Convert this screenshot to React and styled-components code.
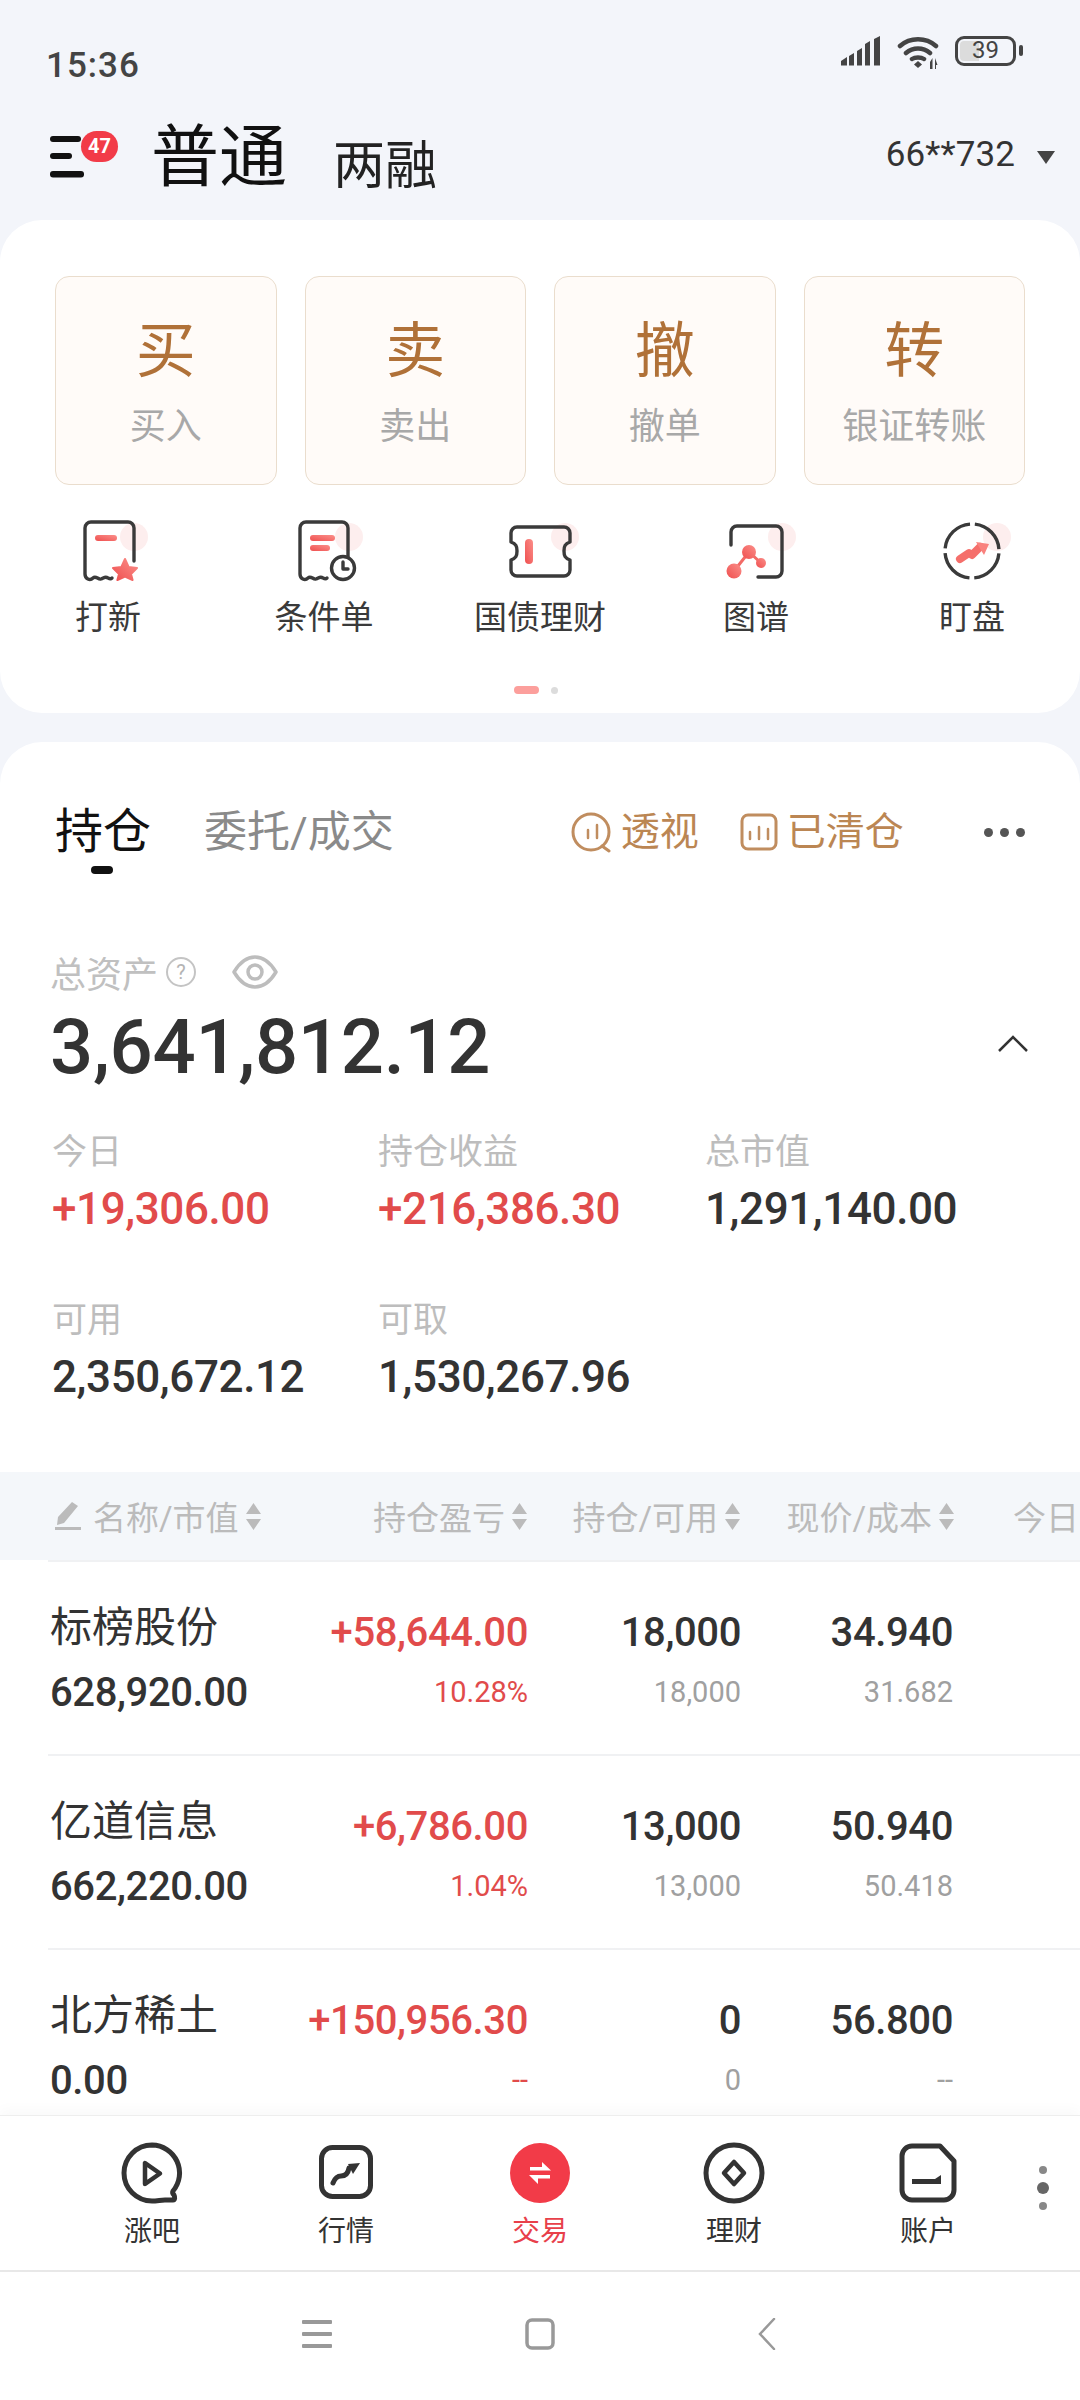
import React from 'react';
import styled, { createGlobalStyle } from 'styled-components';

const GlobalStyle = createGlobalStyle`
  html, body {
    margin: 0;
    padding: 0;
    background: #f3f5fa;
    font-family: Roboto, "Noto Sans CJK SC", sans-serif;
  }
  * { box-sizing: border-box; }
`;

const Screen = styled.div`
  width: 1080px;
  height: 2400px;
  display: flex;
  flex-direction: column;
  overflow: hidden;
  background: #f3f5fa;
`;

const StatusBar = styled.div`
  height: 100px;
  display: flex;
  justify-content: space-between;
  padding: 36px 64px 0 46px;
`;

const Time = styled.div`
  margin-top: 11px;
  font-size: 35px;
  line-height: 38px;
  letter-spacing: 1px;
  font-weight: 500;
  color: #444;
`;

const StatusIcons = styled.div`
  display: flex;
  align-items: flex-start;
  gap: 16px;
`;

const Battery = styled.div`
  position: relative;
  width: 61px;
  height: 30px;
  border: 3.5px solid #444;
  border-radius: 9px;
  background: linear-gradient(90deg, #dcdcdc 0 39%, transparent 39%);
  background-clip: content-box;
  padding: 2px;
  font-size: 24px;
  line-height: 19px;
  text-align: center;
  color: #444;

  &::after {
    content: '';
    position: absolute;
    right: -10px;
    top: 6px;
    width: 4px;
    height: 11px;
    border-radius: 2px;
    background: #444;
  }
`;

const Header = styled.div`
  height: 120px;
  display: flex;
  align-items: center;
  padding: 0 25px 10px 50px;
`;

const MenuWrap = styled.div`
  position: relative;
  width: 68px;
  height: 46px;
  margin: 4px 33px 0 0;
`;

const Badge = styled.span`
  position: absolute;
  left: 31px;
  top: -3px;
  width: 37px;
  height: 31px;
  border-radius: 16px;
  background: #f23b48;
  color: #fff;
  font-size: 20px;
  font-weight: 700;
  line-height: 31px;
  text-align: center;
`;

const Title = styled.div`
  margin-top: 5px;
  font-size: 68px;
  line-height: 70px;
  color: #111;
`;

const SubTitle = styled.div`
  margin: 24px 0 0 46px;
  font-size: 52px;
  line-height: 56px;
  color: #222;
`;

const Account = styled.div`
  margin-left: auto;
  font-size: 35px;
  line-height: 40px;
  letter-spacing: 0.1px;
  color: #333;
`;

const Caret = styled.span`
  margin: 4px 0 0 22px;
  border-left: 9px solid transparent;
  border-right: 9px solid transparent;
  border-top: 13px solid #444;
`;

const QuickCard = styled.section`
  height: 493px;
  padding-top: 56px;
  background: #fff;
  border-radius: 42px;
`;

const ActionGrid = styled.div`
  display: grid;
  grid-template-columns: repeat(4, 1fr);
  gap: 28px;
  padding: 0 55px;
`;

const ActionButton = styled.div`
  height: 209px;
  padding-top: 40px;
  display: flex;
  flex-direction: column;
  align-items: center;
  background: #fffbf8;
  border: 1.5px solid #eaddcd;
  border-radius: 14px;
`;

const ActionChar = styled.div`
  font-size: 60px;
  line-height: 70px;
  color: #b07138;
`;

const ActionLabel = styled.div`
  margin-top: 18px;
  font-size: 36px;
  line-height: 44px;
  color: #a8a8a8;
`;

const ShortcutRow = styled.div`
  margin-top: 30px;
  display: grid;
  grid-template-columns: repeat(5, 216px);
`;

const Shortcut = styled.div`
  display: flex;
  flex-direction: column;
  align-items: center;
`;

const ShortcutLabel = styled.div`
  margin-top: 11px;
  font-size: 33px;
  line-height: 44px;
  white-space: nowrap;
  color: #3a3a3a;
`;

const PageDots = styled.div`
  margin-top: 46px;
  padding-right: 8px;
  display: flex;
  justify-content: center;
  align-items: center;
  gap: 12px;
`;

const PageDot = styled.span`
  width: ${(p) => (p.$active ? 25 : 7)}px;
  height: ${(p) => (p.$active ? 8 : 7)}px;
  border-radius: 4px;
  background: ${(p) => (p.$active ? '#fc9f9c' : '#dcdcdc')};
`;

const HoldingCard = styled.section`
  flex: 1;
  min-height: 0;
  margin-top: 29px;
  overflow: hidden;
  background: #fff;
  border-radius: 42px 42px 0 0;
`;

const TabRow = styled.div`
  height: 60px;
  margin-top: 60px;
  display: flex;
  align-items: center;
  padding: 0 55px;
`;

const Tab = styled.div`
  position: relative;
  flex: none;
  font-size: ${(p) => (p.$active ? 48 : 43)}px;
  line-height: 60px;
  white-space: nowrap;
  color: ${(p) => (p.$active ? '#111' : '#8a8a8a')};
  margin-right: 53px;

  ${(p) =>
    p.$active &&
    `&::after {
      content: '';
      position: absolute;
      left: 36px;
      bottom: -12px;
      width: 22px;
      height: 8px;
      border-radius: 4px;
      background: #111;
    }`}
`;

const ToolLink = styled.div`
  flex: none;
  display: flex;
  align-items: center;
  gap: 9px;
  font-size: 39px;
  line-height: 50px;
  white-space: nowrap;
  color: #bb8653;
  margin-left: ${(p) => p.$gap}px;
`;

const MoreDots = styled.div`
  margin-left: 80px;
  display: flex;
  gap: 7px;
`;

const MoreDot = styled.span`
  width: 9px;
  height: 9px;
  border-radius: 50%;
  background: #555;
`;

const AssetLabelRow = styled.div`
  height: 40px;
  margin-top: 90px;
  padding-left: 50px;
  display: flex;
  align-items: center;
  font-size: 36px;
  color: #c0c0c0;
`;

const HelpMark = styled.span`
  width: 30px;
  height: 30px;
  margin: 0 36px 0 8px;
  border: 2px solid #c4c4c4;
  border-radius: 50%;
  font-size: 20px;
  line-height: 26px;
  text-align: center;
  color: #b4b4b4;
`;

const TotalRow = styled.div`
  height: 80px;
  margin-top: 15px;
  padding: 0 52px 0 50px;
  display: flex;
  align-items: center;
  justify-content: space-between;

  svg {
    margin-bottom: 7px;
  }
`;

const TotalValue = styled.div`
  font-size: 76px;
  line-height: 80px;
  font-weight: 500;
  letter-spacing: -0.3px;
  color: #333;
`;

const StatGrid = styled.div`
  margin-top: 44px;
  padding-left: 52px;
  display: grid;
  grid-template-columns: 326px 327px 1fr;
  row-gap: 65px;
`;

const StatLabel = styled.div`
  font-size: 35px;
  line-height: 44px;
  color: #bdbdbd;
`;

const StatValue = styled.div`
  margin-top: 9px;
  font-size: 44px;
  line-height: 50px;
  letter-spacing: -0.4px;
  font-weight: 500;
  color: ${(p) => (p.$up ? '#e14b4b' : '#333')};
`;

const TableHead = styled.div`
  height: 88px;
  margin-top: 70px;
  display: grid;
  grid-template-columns: 300px 228px 213px 214px 200px;
  align-items: center;
  background: #f4f7fa;
  font-size: 33px;
  color: #bbb;
`;

const HeadCell = styled.div`
  display: flex;
  align-items: center;
  justify-content: ${(p) => (p.$left ? 'flex-start' : 'flex-end')};
  gap: 6px;
  padding-left: ${(p) => p.$pad || 0}px;
  white-space: nowrap;
`;

const PencilIcon = styled.svg`
  margin-right: 6px;
`;

const StockRow = styled.div`
  height: 194px;
  margin-left: 48px;
  border-top: 2px solid #f0f1f3;
  display: grid;
  grid-template-columns: 252px 228px 213px 212px;
`;

const NameCell = styled.div`
  padding: 44px 0 0 2px;
`;

const StockName = styled.div`
  font-size: 42px;
  line-height: 44px;
  color: #333;
`;

const MarketValue = styled.div`
  margin-top: 21px;
  font-size: 40px;
  line-height: 44px;
  letter-spacing: -0.4px;
  font-weight: 500;
  color: #333;
`;

const NumCell = styled.div`
  padding-top: 49px;
  text-align: right;
`;

const MainNum = styled.div`
  font-size: 40px;
  line-height: 44px;
  letter-spacing: -0.4px;
  font-weight: 500;
  color: ${(p) => (p.$up ? '#e14b4b' : '#333')};
`;

const SubNum = styled.div`
  margin-top: 17px;
  font-size: 29px;
  line-height: 40px;
  color: ${(p) => (p.$up ? '#e14b4b' : '#a0a0a0')};
`;

const TabBar = styled.nav`
  height: 155px;
  padding: 26px 0 0 55px;
  display: grid;
  grid-template-columns: repeat(5, 194px) 36px;
  background: #fff;
  border-top: 1px solid #eee;
  box-shadow: 0 -6px 12px rgba(0, 0, 0, 0.025);
  position: relative;
`;

const TabItem = styled.div`
  display: flex;
  flex-direction: column;
  align-items: center;
`;

const TabLabel = styled.div`
  margin-top: 10px;
  font-size: 28px;
  line-height: 36px;
  color: ${(p) => (p.$active ? '#e8404a' : '#333')};
`;

const TabMore = styled.div`
  margin-top: 24px;
  display: flex;
  flex-direction: column;
  align-items: center;
  gap: 8px;
`;

const TabMoreDot = styled.span`
  width: ${(p) => (p.$big ? 12 : 8)}px;
  height: ${(p) => (p.$big ? 12 : 8)}px;
  border-radius: 50%;
  background: ${(p) => (p.$big ? '#666' : '#888')};
`;

const SystemNav = styled.div`
  height: 130px;
  border-top: 2px solid #e8e8e8;
  background: #fff;
  display: grid;
  grid-template-columns: 302px 30px 193px 30px 203px 18px;
  align-items: center;
  padding-bottom: 4px;
`;

const SysCell = styled.div`
  grid-column: ${(p) => p.$col};
  display: flex;
`;

const stats = [
  { label: '今日', value: '+19,306.00', up: true },
  { label: '持仓收益', value: '+216,386.30', up: true },
  { label: '总市值', value: '1,291,140.00' },
  { label: '可用', value: '2,350,672.12' },
  { label: '可取', value: '1,530,267.96' },
];

const stocks = [
  { name: '标榜股份', cap: '628,920.00', pnl: '+58,644.00', rate: '10.28%', hold: '18,000', avail: '18,000', price: '34.940', cost: '31.682' },
  { name: '亿道信息', cap: '662,220.00', pnl: '+6,786.00', rate: '1.04%', hold: '13,000', avail: '13,000', price: '50.940', cost: '50.418' },
  { name: '北方稀土', cap: '0.00', pnl: '+150,956.30', rate: '--', hold: '0', avail: '0', price: '56.800', cost: '--' },
];

const DARK = '#333';

function Gradients() {
  return (
    <svg width="0" height="0" style={{ position: 'absolute' }}>
      <defs>
        <linearGradient id="redFade" x1="0" y1="1" x2="1" y2="0">
          <stop offset="0" stopColor="#ef4f4f" />
          <stop offset="1" stopColor="#fb8f8a" />
        </linearGradient>
      </defs>
    </svg>
  );
}

function ShortcutIcon({ children, haloX = 71 }) {
  return (
    <svg width="90" height="70" viewBox="0 0 90 70" fill="none">
      <circle cx={haloX} cy="22" r="14" fill="#fdeeee" />
      {children}
    </svg>
  );
}

const outline = { stroke: '#3a3a3a', strokeWidth: 3.4, strokeLinecap: 'round', strokeLinejoin: 'round' };

function NewStockIcon() {
  return (
    <ShortcutIcon>
      <path {...outline} d="M71 46V13a6 6 0 0 0-6-6H28a6 6 0 0 0-6 6v46c0 5 5 7 8 4 3-3 5 2 8 1s4-3 7-1c2 1 3 1 4 0" />
      <rect x="32" y="20" width="22" height="6" rx="3" fill="url(#redFade)" />
      <path fill="url(#redFade)" stroke="url(#redFade)" strokeWidth="2" strokeLinejoin="round" d="M62 44l3.600 8 8.400 1-6 6 1.600 6-7.600-3.500-7.600 3.500 1.600-6-6-6 8.400-1z" />
    </ShortcutIcon>
  );
}

function ConditionIcon() {
  return (
    <ShortcutIcon haloX={70}>
      <path {...outline} d="M69 42V13a6 6 0 0 0-6-6H27a6 6 0 0 0-6 6v46c0 5 5 7 8 4 3-3 5 2 8 1s4-3 7-1c2 1 3 1 4 0" />
      <rect x="31" y="20" width="25" height="6" rx="3" fill="url(#redFade)" />
      <rect x="31" y="30" width="20" height="6" rx="3" fill="url(#redFade)" />
      <circle cx="64" cy="53" r="11.500" {...outline} fill="#fff" />
      <path {...outline} d="M64 47v7h5" />
    </ShortcutIcon>
  );
}

function BondIcon() {
  return (
    <ShortcutIcon haloX={70}>
      <path {...outline} d="M22 12h47a6 6 0 0 1 6 6v9c-5 2-6 4-6 9s1 7 6 9v10a6 6 0 0 1-6 6H22a6 6 0 0 1-6-6V45c5-2 6-4 6-9s-1-7-6-9v-9a6 6 0 0 1 6-6z" />
      <rect x="30" y="24" width="8" height="25" rx="4" fill="url(#redFade)" />
    </ShortcutIcon>
  );
}

function GraphIcon() {
  return (
    <ShortcutIcon>
      <path {...outline} d="M20 30V17a6 6 0 0 1 6-6h39a6 6 0 0 1 6 6v39a6 6 0 0 1-6 6H47" />
      <path d="M23 56l15-19 12 11" stroke="#f26a66" strokeWidth="3" />
      <circle cx="38" cy="37" r="7" fill="url(#redFade)" />
      <circle cx="23" cy="56" r="7.500" fill="url(#redFade)" />
      <circle cx="50" cy="48" r="5" fill="url(#redFade)" />
    </ShortcutIcon>
  );
}

function WatchIcon() {
  return (
    <ShortcutIcon haloX={70}>
      <circle cx="45" cy="36" r="27" {...outline} strokeLinecap="butt" strokeDasharray="37.400 5" strokeDashoffset="-2.500" />
      <path stroke="#f56f6b" strokeWidth="8" strokeLinecap="round" strokeLinejoin="round" d="M33 44l9-6 3 2 8-8" />
      <path fill="#f9827e" d="M49 27l13 2-5 11z" />
    </ShortcutIcon>
  );
}

const sortIcon = (
  <svg width="17" height="27" viewBox="0 0 17 27">
    <path fill="#bbb" d="M8.500 0L16 11H1zM8.500 27L1 16h15z" />
  </svg>
);

const shortcuts = [
  { label: '打新', Icon: NewStockIcon },
  { label: '条件单', Icon: ConditionIcon },
  { label: '国债理财', Icon: BondIcon },
  { label: '图谱', Icon: GraphIcon },
  { label: '盯盘', Icon: WatchIcon },
];

const navStroke = { fill: 'none', stroke: DARK, strokeWidth: 5, strokeLinecap: 'round', strokeLinejoin: 'round' };

function NavIcon({ children }) {
  return (
    <svg width="62" height="62" viewBox="0 0 62 62">
      {children}
    </svg>
  );
}

const navItems = [
  {
    label: '涨吧',
    icon: (
      <NavIcon>
        <path {...navStroke} d="M31 3a28 28 0 1 0 0 56c5 0 9-1 13-1h8c2 0 2-3 1-5-1-1-2-2-1-4a28 28 0 0 0-21-46z" />
        <path {...navStroke} strokeWidth="4.500" d="M24 21v21l15-10.500z" />
      </NavIcon>
    ),
  },
  {
    label: '行情',
    icon: (
      <NavIcon>
        <rect {...navStroke} x="6.500" y="5.500" width="49" height="49" rx="11" />
        <path {...navStroke} d="M18 41c2-5 5-7 8-7 4 0 7-2 8-8" />
        <path fill={DARK} d="M33 22l12-1-7 11z" />
      </NavIcon>
    ),
  },
  {
    label: '交易',
    active: true,
    icon: (
      <NavIcon>
        <circle cx="31" cy="31" r="30" fill="#f23b48" />
        <path fill="#fff" d="M21 25h12v-5l9 8.500H21zM41 33v3.500H29v5.500l-9-9z" />
      </NavIcon>
    ),
  },
  {
    label: '理财',
    icon: (
      <NavIcon>
        <circle {...navStroke} cx="31" cy="31" r="28" />
        <path {...navStroke} strokeWidth="4.500" d="M31 20l10 11-10 11-10-11z" />
      </NavIcon>
    ),
  },
  {
    label: '账户',
    icon: (
      <NavIcon>
        <path {...navStroke} d="M15 4h28l14 15v29a10 10 0 0 1-10 10H15A10 10 0 0 1 5 48V14A10 10 0 0 1 15 4z" />
        <path fill={DARK} d="M15 37h23l6-4v9H15z" />
      </NavIcon>
    ),
  },
];

export default function App() {
  return (
    <Screen>
      <GlobalStyle />
      <Gradients />

      <StatusBar>
        <Time>15:36</Time>
        <StatusIcons>
          <svg width="40" height="30" viewBox="0 0 40 30" fill="#444">
            <path d="M0 25l6-4v8.500H0zM8 20l5-3v12.500H8zM16 15l5-3v17.500h-5zM24 8l5-3v24.500h-5zM33 3l6-3v29.500h-6z" />
          </svg>
          <svg width="42" height="34" viewBox="0 0 42 34" fill="none" stroke="#444" strokeLinecap="round">
            <path strokeWidth="4.500" d="M3 10c10-9 26-9 36 0M9 17c7-6 17-6 24 0M15 23c3-2 9-2 12 0" />
            <path fill="#444" stroke="none" d="M21 25l4 3.500-4 3.500-4-3.500z" />
            <path fill="#444" stroke="none" d="M33 26l2.500-4v11H33zM38 22l2.500 7H39v4h-1z" />
          </svg>
          <Battery>39</Battery>
        </StatusIcons>
      </StatusBar>

      <Header>
        <MenuWrap>
          <svg width="36" height="46" viewBox="0 0 36 46" fill="#111">
            <rect y="2" width="31" height="6" rx="3" />
            <rect y="19" width="22" height="6" rx="3" />
            <rect y="37" width="34" height="6.500" rx="3" />
          </svg>
          <Badge>47</Badge>
        </MenuWrap>
        <Title>普通</Title>
        <SubTitle>两融</SubTitle>
        <Account>66**732</Account>
        <Caret />
      </Header>

      <QuickCard>
        <ActionGrid>
          {[
            ['买', '买入'],
            ['卖', '卖出'],
            ['撤', '撤单'],
            ['转', '银证转账'],
          ].map(([char, label]) => (
            <ActionButton key={char}>
              <ActionChar>{char}</ActionChar>
              <ActionLabel>{label}</ActionLabel>
            </ActionButton>
          ))}
        </ActionGrid>
        <ShortcutRow>
          {shortcuts.map(({ label, Icon }) => (
            <Shortcut key={label}>
              <Icon />
              <ShortcutLabel>{label}</ShortcutLabel>
            </Shortcut>
          ))}
        </ShortcutRow>
        <PageDots>
          <PageDot $active />
          <PageDot />
        </PageDots>
      </QuickCard>

      <HoldingCard>
        <TabRow>
          <Tab $active>持仓</Tab>
          <Tab>委托/成交</Tab>
          <ToolLink $gap={123}>
            <svg width="42" height="42" viewBox="0 0 42 42" fill="none" stroke="#c08d5f" strokeWidth="3" strokeLinecap="round">
              <circle cx="21" cy="21" r="18" />
              <path d="M32 35l7 5" />
              <path d="M18 19v8M27 14v13" strokeWidth="2.500" />
            </svg>
            透视
          </ToolLink>
          <ToolLink $gap={41}>
            <svg width="38" height="38" viewBox="0 0 38 38" fill="none" stroke="#c08d5f" strokeWidth="3" strokeLinecap="round">
              <rect x="2" y="2" width="34" height="34" rx="6" />
              <path d="M10 19v7M19 14v12M28 16v10" strokeWidth="2.500" />
            </svg>
            已清仓
          </ToolLink>
          <MoreDots>
            <MoreDot />
            <MoreDot />
            <MoreDot />
          </MoreDots>
        </TabRow>

        <AssetLabelRow>
          总资产
          <HelpMark>?</HelpMark>
          <svg width="46" height="36" viewBox="0 0 46 36" fill="none" stroke="#bdbdbd" strokeWidth="3.500" strokeLinejoin="round">
            <path d="M2 18C8 8 14 3 23 3s15 5 21 15c-6 10-12 15-21 15S8 28 2 18z" />
            <circle cx="23" cy="18" r="7" />
          </svg>
        </AssetLabelRow>

        <TotalRow>
          <TotalValue>3,641,812.12</TotalValue>
          <svg width="30" height="18" viewBox="0 0 30 18" fill="none" stroke="#333" strokeWidth="2.500">
            <path d="M1 16L15 2l14 14" />
          </svg>
        </TotalRow>

        <StatGrid>
          {stats.map((s) => (
            <div key={s.label}>
              <StatLabel>{s.label}</StatLabel>
              <StatValue $up={s.up}>{s.value}</StatValue>
            </div>
          ))}
        </StatGrid>

        <TableHead>
          <HeadCell $left $pad={55}>
            <PencilIcon width="26" height="28" viewBox="0 0 26 28" fill="#bbb">
              <path d="M17 0l6 4L9 21l-7 2 1-8zM0 25h26v3H0z" />
            </PencilIcon>
            名称/市值
            {sortIcon}
          </HeadCell>
          <HeadCell>持仓盈亏{sortIcon}</HeadCell>
          <HeadCell>持仓/可用{sortIcon}</HeadCell>
          <HeadCell>现价/成本{sortIcon}</HeadCell>
          <HeadCell $left $pad={58}>今日</HeadCell>
        </TableHead>

        {stocks.map((s) => (
          <StockRow key={s.name}>
            <NameCell>
              <StockName>{s.name}</StockName>
              <MarketValue>{s.cap}</MarketValue>
            </NameCell>
            <NumCell>
              <MainNum $up>{s.pnl}</MainNum>
              <SubNum $up>{s.rate}</SubNum>
            </NumCell>
            <NumCell>
              <MainNum>{s.hold}</MainNum>
              <SubNum>{s.avail}</SubNum>
            </NumCell>
            <NumCell>
              <MainNum>{s.price}</MainNum>
              <SubNum>{s.cost}</SubNum>
            </NumCell>
          </StockRow>
        ))}
      </HoldingCard>

      <TabBar>
        {navItems.map((item) => (
          <TabItem key={item.label}>
            {item.icon}
            <TabLabel $active={item.active}>{item.label}</TabLabel>
          </TabItem>
        ))}
        <TabMore>
          <TabMoreDot />
          <TabMoreDot $big />
          <TabMoreDot />
        </TabMore>
      </TabBar>

      <SystemNav>
        <SysCell $col={2}>
          <svg width="30" height="28" viewBox="0 0 30 28" fill="#999">
            <rect width="30" height="4" rx="1" />
            <rect y="12" width="30" height="4" rx="1" />
            <rect y="24" width="30" height="4" rx="1" />
          </svg>
        </SysCell>
        <SysCell $col={4}>
          <svg width="30" height="32" viewBox="0 0 30 32" fill="none" stroke="#999" strokeWidth="3.500">
            <rect x="2" y="2" width="26" height="28" rx="5" />
          </svg>
        </SysCell>
        <SysCell $col={6}>
          <svg width="18" height="32" viewBox="0 0 18 32" fill="none" stroke="#999" strokeWidth="2.500" strokeLinecap="round">
            <path d="M16 1L2 16l14 15" />
          </svg>
        </SysCell>
      </SystemNav>
    </Screen>
  );
}
